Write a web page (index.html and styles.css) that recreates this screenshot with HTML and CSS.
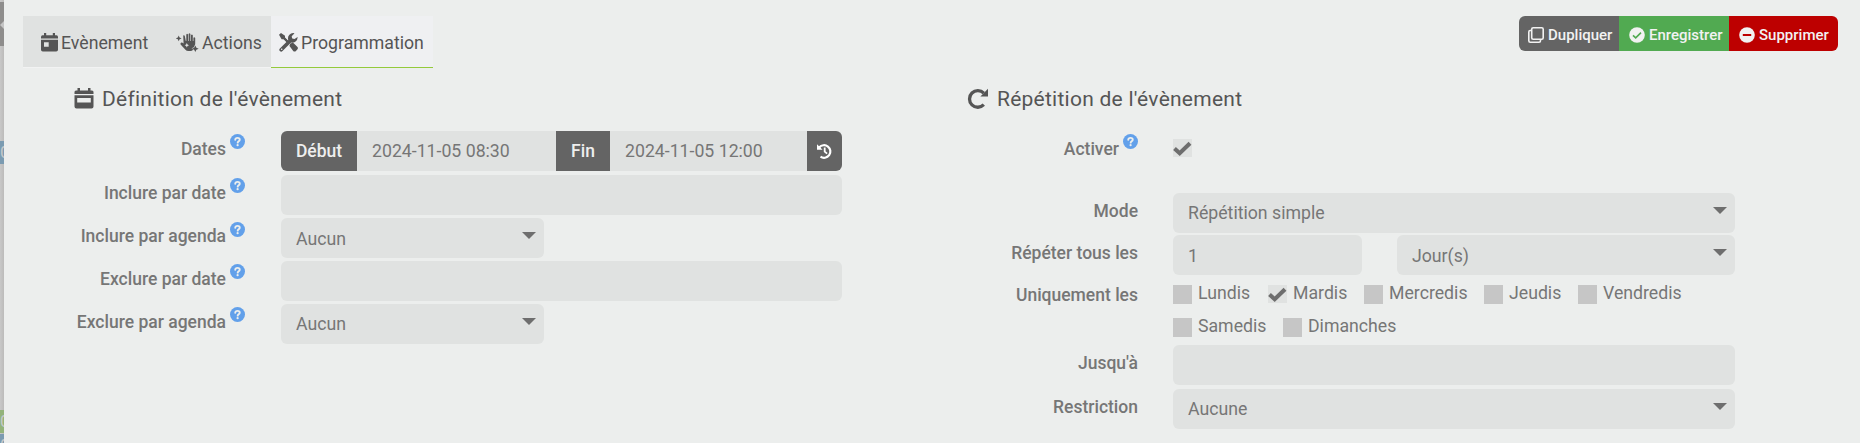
FILE: index.html
```html
<!DOCTYPE html>
<html lang="fr">
<head>
    <meta charset="UTF-8">
    <meta name="viewport" content="width=device-width, initial-scale=1.0">
    <title>Programmation de l'évènement</title>
    <link rel="stylesheet" href="styles.css">
</head>
<body>
    <!-- shared icons -->
    <svg class="sprite">
        <symbol id="help" viewBox="0 0 16 16">
            <circle cx="8" cy="8" r="8" fill="#62a0ea"/>
            <path d="M5.600 6.100C5.700 4.700 6.800 4.100 8 4.100c1.300 0 2.400.7 2.400 2 0 1.500-2.200 1.600-2.200 3.100" fill="none" stroke="#eceeed" stroke-width="2" stroke-linecap="round"/>
            <circle cx="8.100" cy="11.900" r="1.200" fill="#eceeed"/>
        </symbol>
        <symbol id="check" viewBox="0 0 19 18">
            <path d="M1.500 9.500l5.200 4.800L17 4.200" fill="none" stroke="#6e6e6e" stroke-width="4"/>
        </symbol>
    </svg>

    <div class="page">
        <div class="behind">
            <div class="bar"><span></span></div>
            <div class="tag blue">0</div>
            <div class="tag green">0</div>
            <div class="tag blue last">0</div>
        </div>

        <div class="modal">
            <div class="top">
                <div class="tabs">
                    <a class="tab first">
                        <svg width="17" height="19" viewBox="0 0 17 19" fill="#555"><path d="M3 0h2.200v2.300h6.600V0H14v2.300h1.500Q17 2.300 17 4v1.400H0V4q0-1.700 1.500-1.700H3z"/><path fill-rule="evenodd" d="M0 6.700h17v10q0 1.800-1.800 1.800H1.800Q0 18.500 0 16.700zM3 9.200v4.500h4.700V9.200z"/></svg>
                        Evènement
                    </a>
                    <a class="tab second">
                        <svg width="23" height="19" viewBox="0 0 23 19" fill="#555"><path d="M2.700 2.500l.9 2 2 .9-2 .9-.9 2-.9-2-2-.9 2-.9zM19.300 12.500l1.100 2.300 2.300 1-2.300 1-1.100 2.200-1.100-2.200-2.300-1 2.300-1z"/><path fill-rule="evenodd" d="M7.200 2.500q1.200-.6 1.600.6L9.800 8h.5V1.500Q11.100.1 12 1.500V8h.6V.9q.9-1.400 1.800 0V8h.6V2.200q.9-1.400 1.800 0V8h.6V4.700q1-1.200 1.800.2v6.400l-1.300 3-2.300 1 1.600 1.200q-1 1.500-2.800 1.500h-1.900q-2 0-3.300-1.500L4.600 11.400q-.5-1.500.9-1.900.8-.2 2.100 1.100zM10.800 10l-.7 1.500-1.500.7 1.500.7.7 1.500.7-1.500 1.500-.7-1.500-.7z"/></svg>
                        Actions
                    </a>
                    <a class="tab active">
                        <svg width="19" height="19" viewBox="0 0 19 19"><path d="M3.500 3.500l5 5M12 11.500l4.500 4.500" stroke="#555" stroke-width="2.200" stroke-linecap="round"/><path d="M0 1.800L2 0l4 2.700v2.400l3 3-1.200 1.200-3-3H2.600zM10.500 13q0-1 .8-1.800l1.500-1.200q1-.5 1.900.2l3.800 3.800q.8 1.200 0 2.300l-1.800 1.900q-1.100.8-2.300 0z" fill="#555"/><path d="M2.200 16.800L12 7" stroke="#555" stroke-width="3.700" stroke-linecap="round"/><path d="M18.600 4a5.200 5.200 0 0 1-7.600 5L9.300 7A5.200 5.200 0 0 1 15.500.3l-2.800 2.900.4 2.400 2.400.5z" fill="#555"/><circle cx="2.700" cy="16.300" r=".8" fill="#eff0f2"/></svg>
                        Programmation
                    </a>
                </div>
                <div class="buttons">
                    <a class="btn grey"><svg width="16" height="16" viewBox="0 0 16 16" fill="none" stroke="#f2f2f2" stroke-width="1.600"><rect x="3.700" y=".8" width="11.500" height="11.500" rx="1.500"/><path d="M3.500 3.500H2.200Q.8 3.500.8 5v8.700q0 1.500 1.500 1.500H11q1.500 0 1.500-1.500v-1"/></svg>Dupliquer</a>
                    <a class="btn green"><svg width="16" height="16" viewBox="0 0 16 16"><circle cx="8" cy="8" r="7.800" fill="#f2f2f2"/><path d="M4 8.300l2.700 2.600L12 5.600" fill="none" stroke="#51aa51" stroke-width="1.600"/></svg>Enregistrer</a>
                    <a class="btn red"><svg width="16" height="16" viewBox="0 0 16 16"><circle cx="8" cy="8" r="7.800" fill="#f2f2f2"/><path d="M3.800 8h8.400" stroke="#bd0000" stroke-width="2.200"/></svg>Supprimer</a>
                </div>
            </div>

            <div class="columns">
                <div class="col left">
                    <h2 class="legend">
                        <svg width="20" height="21" viewBox="0 0 20 21" fill="#555"><path d="M3.500 0H6v2.500h8V0h2.500v2.500H18q1.500 0 1.500 1.500v2H.5V4Q.5 2.500 2 2.500h1.500z"/><path fill-rule="evenodd" d="M.5 7.200h19v11.300q0 2-2 2h-15q-2 0-2-2zM3.200 10v4.600h13.600V10z"/></svg>
                        <span>Définition de l'évènement</span>
                    </h2>
                    <div class="row dates">
                        <label>Dates <svg class="help"><use href="#help"/></svg></label>
                        <div class="group">
                            <span class="addon debut">Début</span>
                            <div class="input start">2024-11-05 08:30</div>
                            <span class="addon fin">Fin</span>
                            <div class="input end">2024-11-05 12:00</div>
                            <span class="addon history"><svg width="17" height="17" viewBox="0 0 17 17" fill="none" stroke="#fff"><path d="M3.200 4.500A6.300 6.300 0 1 1 4.500 13.700" stroke-width="2.200"/><path d="M1 1.200v5.600h5.600z" fill="#fff" stroke="none"/><path d="M8.700 4.600v4l2.400 2" stroke-width="1.800"/></svg></span>
                        </div>
                    </div>
                    <div class="row">
                        <label>Inclure par date <svg class="help"><use href="#help"/></svg></label>
                        <div class="input full"></div>
                    </div>
                    <div class="row">
                        <label>Inclure par agenda <svg class="help low"><use href="#help"/></svg></label>
                        <div class="input select small low-text">Aucun</div>
                    </div>
                    <div class="row">
                        <label>Exclure par date <svg class="help"><use href="#help"/></svg></label>
                        <div class="input full"></div>
                    </div>
                    <div class="row">
                        <label>Exclure par agenda <svg class="help"><use href="#help"/></svg></label>
                        <div class="input select small">Aucun</div>
                    </div>
                </div>

                <div class="col right">
                    <h2 class="legend">
                        <svg width="22" height="21" viewBox="0 0 22 21"><path d="M16.800 5.200A8.300 8.300 0 1 0 16.800 16.700" fill="none" stroke="#555" stroke-width="3.300"/><path d="M21 .7v7.900h-7.600z" fill="#555"/></svg>
                        <span>Répétition de l'évènement</span>
                    </h2>
                    <div class="row activer">
                        <label>Activer <svg class="help"><use href="#help"/></svg></label>
                        <span class="box on"><svg><use href="#check"/></svg></span>
                    </div>
                    <div class="row mode">
                        <label>Mode</label>
                        <div class="input select full">Répétition simple</div>
                    </div>
                    <div class="row repeat">
                        <label>Répéter tous les</label>
                        <div class="input number low-text">1</div>
                        <div class="input select unit low-text">Jour(s)</div>
                    </div>
                    <div class="row days">
                        <label>Uniquement les</label>
                        <div class="daylist">
                            <div class="dayline">
                                <span class="day lun"><i class="box"></i>Lundis</span>
                                <span class="day mar"><i class="box on"><svg><use href="#check"/></svg></i>Mardis</span>
                                <span class="day mer"><i class="box"></i>Mercredis</span>
                                <span class="day jeu"><i class="box"></i>Jeudis</span>
                                <span class="day ven"><i class="box"></i>Vendredis</span>
                            </div>
                            <div class="dayline">
                                <span class="day sam"><i class="box"></i>Samedis</span>
                                <span class="day dim"><i class="box"></i>Dimanches</span>
                            </div>
                        </div>
                    </div>
                    <div class="row until">
                        <label>Jusqu'à</label>
                        <div class="input full"></div>
                    </div>
                    <div class="row">
                        <label>Restriction</label>
                        <div class="input select full">Aucune</div>
                    </div>
                </div>
            </div>
        </div>
    </div>
</body>
</html>
```
FILE: styles.css
```css
* {
    box-sizing: border-box;
}
body {
    margin: 0;
    font-family: Roboto, sans-serif;
    font-size: 17.5px;
    color: #767676;
    background-color: #eceeed;
    overflow: hidden;
}
.sprite {
    display: none;
}
svg {
    flex: none;
}
.page {
    display: flex;
    height: 443px;
}

/* strip of the page under the dialog */
.behind {
    width: 4px;
    background: linear-gradient(to right, #c8c8c8, #bcbbba);
    overflow: hidden;
}
.bar {
    height: 44px;
    margin-top: 2px;
    padding-top: 19px;
    background-color: #8e8d8c;
}
.bar span {
    display: block;
    width: 0;
    border: 4px solid transparent;
    border-right-color: #c4c4c4;
    border-left: 0;
}
.tag {
    height: 23px;
    line-height: 23px;
    font-size: 17px;
    color: #c4c8ca;
}
.tag.blue {
    margin-top: 95px;
    background-color: #7b9bb1;
}
.tag.green {
    margin-top: 246px;
    background-color: #93b37b;
}
.tag.last {
    margin-top: 1px;
}

.modal {
    flex: 1;
    padding: 16px 22px 0 19px;
}
.top {
    display: flex;
    justify-content: space-between;
    height: 52px;
}
.tabs {
    display: flex;
    font-size: 17.7px;
    color: #555;
}
.tab {
    display: flex;
    align-items: center;
    gap: 3px;
    height: 52px;
    padding-top: 2px;
    background-color: #e0e2e1;
    border-bottom: 1px solid #f2f3f3;
    white-space: nowrap;
}
.tab.first {
    width: 143px;
    padding-left: 18px;
}
.tab.second {
    width: 105px;
    padding-left: 10px;
}
.tab.active {
    width: 162px;
    padding-left: 8px;
    background-color: #eff0f2;
    border-bottom-color: #94ca3c;
}
.buttons {
    display: flex;
    height: 35px;
    border-radius: 6px;
    overflow: hidden;
}
.btn {
    display: flex;
    align-items: center;
    gap: 4px;
    padding: 2px 0 0 9px;
    font-size: 15px;
    color: #f2f2f2;
    font-weight: 500;
}
.btn.grey {
    width: 100px;
    background-color: #646464;
}
.btn.green {
    width: 110px;
    padding-left: 10px;
    background-color: #51aa51;
}
.btn.red {
    width: 109px;
    padding-left: 10px;
    background-color: #bd0000;
}

.columns {
    display: flex;
    padding-top: 20px;
}
.col.left {
    flex: none;
    width: 942px;
    padding-left: 50px;
}
.legend {
    display: flex;
    gap: 8px;
    height: 43px;
    margin: 0;
    font-size: 21px;
    font-weight: 400;
    line-height: 22px;
    color: #555;
    letter-spacing: .25px;
}
.left .legend {
    padding-left: 1px;
}
.row {
    display: flex;
    height: 40px;
    margin-bottom: 3px;
}
.row.dates {
    margin-bottom: 4px;
}
label {
    display: flex;
    justify-content: flex-end;
    gap: 4px;
    width: 172px;
    margin-right: 36px;
    font-weight: 500;
    line-height: 36px;
    white-space: nowrap;
}
.right label {
    width: 173px;
    margin-right: 35px;
}
.help {
    width: 15px;
    height: 15px;
    margin-top: 3px;
}
.help.low {
    margin-top: 4px;
}
.input {
    height: 40px;
    padding: 0 15px;
    font-size: 17.7px;
    line-height: 40px;
    background-color: #e0e2e1;
    border-radius: 6px;
    white-space: nowrap;
}
.low-text {
    line-height: 42px;
}
.full {
    width: 562px;
}
.left .full {
    width: 561px;
}
.small {
    width: 263px;
}
.select {
    display: flex;
    justify-content: space-between;
    padding-right: 8px;
}
.select::after {
    content: "";
    height: 0;
    margin-top: 14px;
    border: 7px solid transparent;
    border-top-color: #6e6e6e;
    border-bottom: 0;
}
.group {
    display: flex;
    border-radius: 6px;
    overflow: hidden;
}
.group .input {
    border-radius: 0;
}
.start {
    width: 199px;
}
.end {
    width: 197px;
}
.addon {
    display: flex;
    align-items: center;
    justify-content: center;
    height: 40px;
    font-weight: 500;
    color: #eee;
    background-color: #646464;
}
.debut {
    width: 76px;
}
.fin {
    width: 54px;
}
.history {
    width: 35px;
}

/* repeat column */
.right .legend {
    padding-left: 2px;
}
.right .row.activer {
    margin-bottom: 22px;
}
.activer .box {
    margin-top: 8px;
}
.row.mode,
.row.repeat {
    margin-bottom: 2px;
}
.number {
    width: 189px;
    margin-right: 35px;
}
.unit {
    width: 338px;
}
.row.days {
    height: 68px;
    margin: 0;
}
.box {
    display: block;
    flex: none;
    width: 19px;
    height: 19px;
    background-color: #c6c6c6;
}
.box.on {
    width: 19px;
    height: 18px;
    background-color: #e0e2e1;
}
.box svg {
    display: block;
    width: 19px;
    height: 18px;
}
.daylist {
    padding-top: 8px;
    font-size: 17.7px;
}
.dayline {
    display: flex;
    height: 33px;
}
.day {
    display: flex;
    gap: 6px;
    line-height: 17px;
}
.lun {
    width: 95px;
}
.mar {
    width: 96px;
}
.mer {
    width: 120px;
}
.jeu {
    width: 94px;
}
.sam {
    width: 110px;
}
.row.until {
    margin-bottom: 4px;
}
```
